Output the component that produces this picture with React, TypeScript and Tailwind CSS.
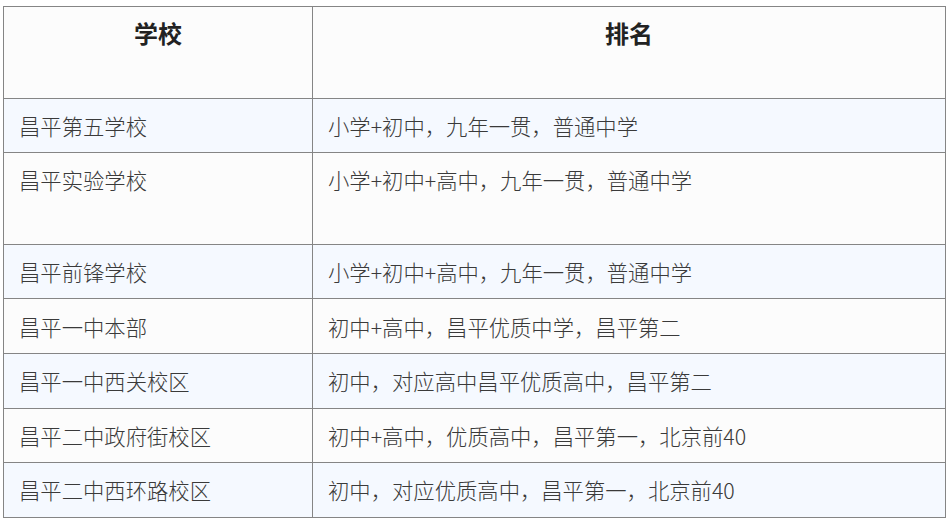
import React from "react";

const rows: { school: string; rank: string; tall?: boolean }[] = [
  { school: "昌平第五学校", rank: "小学+初中，九年一贯，普通中学" },
  { school: "昌平实验学校", rank: "小学+初中+高中，九年一贯，普通中学", tall: true },
  { school: "昌平前锋学校", rank: "小学+初中+高中，九年一贯，普通中学" },
  { school: "昌平一中本部", rank: "初中+高中，昌平优质中学，昌平第二" },
  { school: "昌平一中西关校区", rank: "初中，对应高中昌平优质高中，昌平第二" },
  { school: "昌平二中政府街校区", rank: "初中+高中，优质高中，昌平第一，北京前40" },
  { school: "昌平二中西环路校区", rank: "初中，对应优质高中，昌平第一，北京前40" },
];

export default function App() {
  return (
    <div
      className="w-[952px] h-[523px] bg-white pt-[6px] pl-[3px]"
      style={{ fontFamily: '"Noto Sans CJK SC", "Noto Sans", sans-serif' }}
    >
      <table className="w-[943px] table-fixed border-collapse text-[#3a3a3a] text-[21.33px] leading-[37px] font-light">
        <colgroup>
          <col className="w-[309px]" />
          <col />
        </colgroup>
        <thead>
          <tr className="bg-[#fcfcfc]">
            <th className="border border-[#858585] px-[16px] pt-[7px] pb-[9.6px] text-center align-top font-bold text-[24px] text-[#222222] leading-[37px]">
              学校
              <br />
              &nbsp;
            </th>
            <th className="border border-[#858585] px-[16px] pt-[7px] pb-[9.6px] text-center align-top font-bold text-[24px] text-[#222222] leading-[37px]">
              排名
              <br />
              &nbsp;
            </th>
          </tr>
        </thead>
        <tbody>
          {rows.map((r, i) => (
            <tr key={i} className={i % 2 === 0 ? "bg-[#f5f9ff]" : "bg-[#fcfcfc]"}>
              <td className="border border-[#858585] pl-[15px] pr-[16px] py-[8.3px] align-top whitespace-nowrap">
                {r.school}
                {r.tall && (
                  <>
                    <br />
                    &nbsp;
                  </>
                )}
              </td>
              <td className="border border-[#858585] pl-[15px] pr-[16px] py-[8.3px] align-top whitespace-nowrap">
                {r.rank}
                {r.tall && (
                  <>
                    <br />
                    &nbsp;
                  </>
                )}
              </td>
            </tr>
          ))}
        </tbody>
      </table>
    </div>
  );
}
